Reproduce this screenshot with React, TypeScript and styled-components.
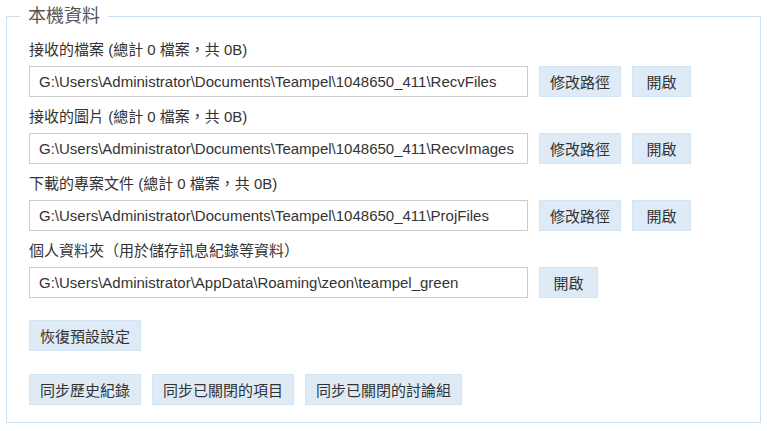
import React from 'react';
import styled, { createGlobalStyle } from 'styled-components';

const GlobalStyle = createGlobalStyle`
  html, body {
    margin: 0;
    padding: 0;
    background: #ffffff;
  }
  body {
    font-family: "Liberation Sans", "Noto Sans CJK TC", sans-serif;
    color: #333333;
  }
`;

const Page = styled.div`
  padding: 6px 6px 9px 6px;
`;

const Panel = styled.fieldset`
  margin: 0;
  border: 1px solid #c8e0f2;
  padding: 14px 22px 14px 22px;
  min-width: 0;
  box-sizing: border-box;
  height: 417px;
`;

const Title = styled.legend`
  margin-left: -9px;
  padding: 0 8px;
  font-size: 18px;
  line-height: 20px;
  color: #555555;
`;

const Section = styled.div`
  display: flex;
  flex-direction: column;
  gap: 6px;
  margin-bottom: 10px;
`;

const Label = styled.div`
  font-size: 15px;
  line-height: 20px;
  color: #333333;
`;

const Row = styled.div`
  display: flex;
  align-items: center;
  gap: 11px;
`;

const PathInput = styled.input`
  width: 499px;
  height: 31px;
  box-sizing: border-box;
  border: 1px solid #cccccc;
  padding: 0 9px;
  font-family: "Liberation Sans", "Noto Sans CJK TC", sans-serif;
  font-size: 15px;
  color: #333333;
  background: #ffffff;
  outline: none;
`;

const Button = styled.button<{ $width?: number }>`
  height: 31px;
  box-sizing: border-box;
  ${(p) => (p.$width ? `width: ${p.$width}px; padding: 0;` : 'padding: 0 10px;')}
  border: 1px solid #d3e4f3;
  background: #deebf7;
  color: #333333;
  font-family: "Liberation Sans", "Noto Sans CJK TC", sans-serif;
  font-size: 15px;
  cursor: pointer;
`;

// sibling margins collapse with the last section's margin-bottom
const Actions = styled.div<{ $top: number }>`
  display: flex;
  gap: 11px;
  margin-top: ${(p) => p.$top}px;
`;

type Folder = {
  label: string;
  path: string;
  editable: boolean;
};

const folders: Folder[] = [
  {
    label: '接收的檔案 (總計 0 檔案，共 0B)',
    path: 'G:\\Users\\Administrator\\Documents\\Teampel\\1048650_411\\RecvFiles',
    editable: true,
  },
  {
    label: '接收的圖片 (總計 0 檔案，共 0B)',
    path: 'G:\\Users\\Administrator\\Documents\\Teampel\\1048650_411\\RecvImages',
    editable: true,
  },
  {
    label: '下載的專案文件 (總計 0 檔案，共 0B)',
    path: 'G:\\Users\\Administrator\\Documents\\Teampel\\1048650_411\\ProjFiles',
    editable: true,
  },
  {
    label: '個人資料夾（用於儲存訊息紀錄等資料）',
    path: 'G:\\Users\\Administrator\\AppData\\Roaming\\zeon\\teampel_green',
    editable: false,
  },
];

const App = () => {
  return (
    <>
      <GlobalStyle />
      <Page>
        <Panel>
          <Title>本機資料</Title>
          {folders.map((f) => (
            <Section key={f.label}>
              <Label>{f.label}</Label>
              <Row>
                <PathInput value={f.path} readOnly />
                {f.editable && <Button $width={82}>修改路徑</Button>}
                <Button $width={59}>開啟</Button>
              </Row>
            </Section>
          ))}
          <Actions $top={22}>
            <Button>恢復預設設定</Button>
          </Actions>
          <Actions $top={23}>
            <Button>同步歷史紀錄</Button>
            <Button>同步已關閉的項目</Button>
            <Button>同步已關閉的討論組</Button>
          </Actions>
        </Panel>
      </Page>
    </>
  );
};

export default App;
